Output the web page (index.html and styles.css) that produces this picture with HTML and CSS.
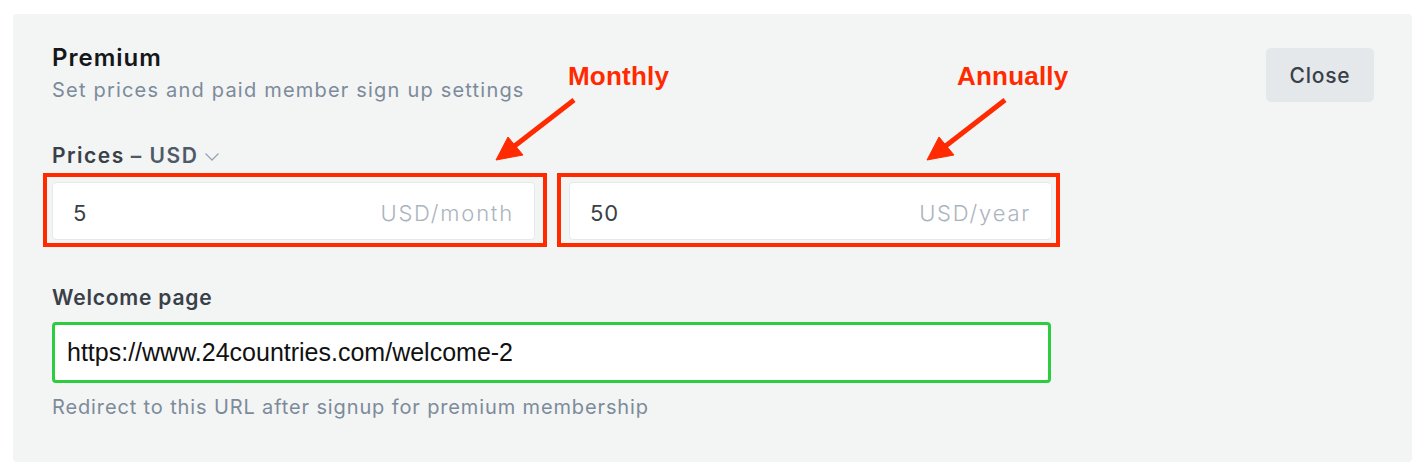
FILE: index.html
```html
<!DOCTYPE html>
<html lang="en">
<head>
<meta charset="utf-8">
<title>Premium settings</title>
<link rel="stylesheet" href="styles.css">
</head>
<body>
<section class="panel">
  <header class="panel-head">
    <div class="titles">
      <h2 class="title">Premium</h2>
      <p class="subtitle">Set prices and paid member sign up settings</p>
    </div>
    <button class="btn-close" type="button">Close</button>
  </header>

  <div class="prices-label">
    <span class="prices-word">Prices</span> <span class="prices-cur">– USD</span>
    <svg class="chev" width="16" height="10" viewBox="0 0 16 10"><path d="M1.5 1.5 L8 8 L14.5 1.5" fill="none" stroke="#9aa5b0" stroke-width="1.3"/></svg>
  </div>

  <div class="price-grid">
    <div class="price-field">
      <div class="price-input"><span class="val">5</span><span class="suffix">USD/month</span></div>
      <div class="mark mark-month"></div>
    </div>
    <div class="price-field">
      <div class="price-input"><span class="val">50</span><span class="suffix">USD/year</span></div>
      <div class="mark mark-year"></div>
    </div>
  </div>

  <label class="field-label">Welcome page</label>
  <div class="url-input">https://www.24countries.com/welcome-2</div>
  <p class="hint">Redirect to this URL after signup for premium membership</p>
</section>

<div class="annotations">
  <span class="note note-month">Monthly</span>
  <span class="note note-year">Annually</span>
  <svg class="arrows" width="1426" height="472" viewBox="0 0 1426 472">
    <g fill="#ff2a00" stroke="#ff2a00">
      <line x1="574" y1="100" x2="512" y2="148" stroke-width="5"/>
      <polygon points="496,160 523,155 508,137" stroke-width="1"/>
      <line x1="1005" y1="100" x2="943" y2="148" stroke-width="5"/>
      <polygon points="927,160 954,155 939,137" stroke-width="1"/>
    </g>
  </svg>
</div>
</body>
</html>
```

FILE: styles.css
```css
* { box-sizing: border-box; }

html, body {
  margin: 0;
  padding: 0;
  background: #ffffff;
  width: 1426px;
  height: 472px;
  overflow: hidden;
}

body {
  font-family: Inter, "Noto Sans", sans-serif;
  position: relative;
}

.panel {
  margin: 14px 14px 0 13px;
  height: 448px;
  background: #f3f4f4;
  border-radius: 4px;
  padding: 30px 38px 0 39px;
  display: flex;
  flex-direction: column;
  align-items: flex-start;
}

.panel-head {
  width: 100%;
  display: flex;
  justify-content: space-between;
  align-items: flex-start;
}

.title {
  margin: 0;
  font-size: 24px;
  line-height: 28px;
  font-weight: 600;
  letter-spacing: 1px;
  color: #15171a;
}

.subtitle {
  margin: 5px 0 0;
  font-size: 20px;
  line-height: 26px;
  letter-spacing: 1.2px;
  color: #7c8b9a;
}

.btn-close {
  margin-top: 4px;
  width: 108px;
  height: 54px;
  border: 0;
  border-radius: 5px;
  background: #e5e8eb;
  color: #394047;
  font-family: Inter, "Noto Sans", sans-serif;
  font-size: 21px;
  font-weight: 500;
  letter-spacing: 0.8px;
}

.prices-label {
  margin-top: 40px;
  font-size: 21px;
  line-height: 26px;
  font-weight: 600;
  letter-spacing: 1.5px;
  display: flex;
  align-items: center;
  gap: 6px;
}
.prices-word { color: #394047; }
.prices-cur { color: #4d5a67; }
.chev { margin-left: 0; margin-top: 1px; }

.price-grid {
  margin-top: 13px;
  width: 1000px;
  display: grid;
  grid-template-columns: 1fr 1fr;
  column-gap: 34px;
}

.price-field { position: relative; }

.price-input {
  height: 58px;
  background: #ffffff;
  border: 1px solid #e6e9eb;
  border-radius: 4px;
  display: flex;
  align-items: center;
  justify-content: space-between;
  padding: 4px 20px 0 20px;
  font-size: 22px;
}
.val { color: #394047; letter-spacing: 0.8px; }
.suffix { color: #abb4be; font-weight: 300; letter-spacing: 1.8px; }

.mark {
  position: absolute;
  top: -9px;
  bottom: -7px;
  border: 4px solid #ff2a00;
}
.mark-month { left: -9px; right: -12px; }
.mark-year { left: -12px; right: -8px; }

.field-label {
  margin-top: 45px;
  font-size: 21px;
  line-height: 26px;
  font-weight: 600;
  letter-spacing: 0.8px;
  color: #394047;
}

.url-input {
  margin-top: 11px;
  width: 999px;
  height: 61px;
  background: #ffffff;
  border: 3px solid #2ccd3e;
  border-radius: 4px;
  display: flex;
  align-items: center;
  padding-left: 12px;
  font-family: "Liberation Sans", Arial, sans-serif;
  font-size: 25px;
  color: #111111;
}

.hint {
  margin: 11px 0 0;
  font-size: 20px;
  line-height: 26px;
  letter-spacing: 0.87px;
  color: #7c8b9a;
}

.annotations {
  position: absolute;
  left: 0;
  top: 0;
  width: 1426px;
  height: 472px;
  pointer-events: none;
}

.arrows { position: absolute; left: 0; top: 0; }

.note {
  position: absolute;
  font-family: "Liberation Sans", Arial, sans-serif;
  font-weight: 700;
  font-size: 26px;
  line-height: 30px;
  letter-spacing: 0.2px;
  color: #ff2a00;
}
.note-month { left: 568px; top: 61px; }
.note-year { left: 957px; top: 61px; }
```
